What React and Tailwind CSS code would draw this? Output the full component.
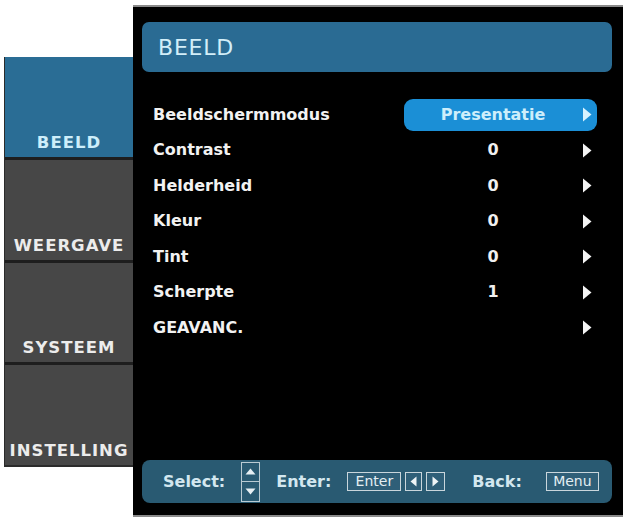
import React from "react";

const font = { fontFamily: '"DejaVu Sans", Verdana, sans-serif' };

function Arrow({ className = "fill-white" }) {
  return (
    <svg width="10" height="15" viewBox="0 0 10 15" className={className}>
      <path d="M1 0.5 L9.5 7.5 L1 14.5 Z" />
    </svg>
  );
}

function Row({ label, value, active }) {
  return (
    <div className="flex h-[35.5px] items-center">
      <div className="flex-1 pl-[11px] text-[16px] font-bold text-[#f2f2f2]">{label}</div>
      <div
        className={
          "mr-[15px] flex h-[32px] w-[193px] items-center rounded-[9px] " +
          (active ? "bg-[#1b8fd6]" : "")
        }
      >
        <span
          className={
            "w-[178px] text-center text-[16px] font-bold " +
            (active ? "text-[#cdeefb]" : "text-[#f0f0f0]")
          }
        >
          {value}
        </span>
        <Arrow className={active ? "fill-[#d8f3ff]" : "fill-[#f4f4f4]"} />
      </div>
    </div>
  );
}

function Tab({ label, active }) {
  return (
    <div
      className={
        "flex h-[100px] items-end justify-center pb-[6px] text-[16.5px] font-bold leading-[17px] tracking-[1px] " +
        (active ? "bg-[#2a6d95] text-[#cdeefa]" : "bg-[#474747] text-[#ececec]")
      }
    >
      {label}
    </div>
  );
}

function KeyBox({ children, className = "" }) {
  return (
    <div
      className={
        "flex h-[19px] items-center justify-center border border-[#c9d6dc] bg-[#2f5f78] text-[14px] text-[#e4eef2] " +
        className
      }
    >
      {children}
    </div>
  );
}

export default function App() {
  const rows = [
    ["Beeldschermmodus", "Presentatie", true],
    ["Contrast", "0"],
    ["Helderheid", "0"],
    ["Kleur", "0"],
    ["Tint", "0"],
    ["Scherpte", "1"],
    ["GEAVANC.", ""],
  ];

  return (
    <div className="flex h-[520px] w-[623px] overflow-hidden bg-white pl-[4px]" style={font}>
      {/* side menu */}
      <div className="mt-[57px] flex h-[410px] w-[129px] flex-col gap-[3px] border-b-2 border-l border-[#2b2b2b] bg-[#1e1e1e]">
        <Tab label="BEELD" active />
        <Tab label="WEERGAVE" />
        <Tab label="SYSTEEM" />
        <Tab label="INSTELLING" />
      </div>

      {/* main panel */}
      <div className="mt-[5px] flex h-[512px] flex-1 flex-col border-y-2 border-[#8a8a8a] bg-black pl-[9px] pr-[11px]">
        <div className="mt-[15px] flex h-[50px] items-center rounded-[7px] bg-[#2a6b93] pl-[16px] text-[22px] tracking-[0.8px] text-[#d2eef8]">
          BEELD
        </div>

        <div className="mt-[25px] flex flex-col">
          {rows.map(([l, v, a]) => (
            <Row key={l} label={l} value={v} active={a} />
          ))}
        </div>

        {/* key help bar */}
        <div className="mb-[12px] mt-auto flex h-[43px] items-center rounded-[8px] bg-[#295a72] pl-[21px] text-[16px] font-bold text-[#d3e7ef]">
          <span>Select:</span>
          <div className="ml-[16px] flex h-[40px] w-[19px] flex-col border border-[#b9cbd3]">
            <div className="flex flex-1 items-center justify-center border-b border-[#b9cbd3]">
              <svg width="11" height="7" viewBox="0 0 11 7" className="fill-[#e6eff3]">
                <path d="M0.5 6.5 L5.5 0.5 L10.5 6.5 Z" />
              </svg>
            </div>
            <div className="flex flex-1 items-center justify-center">
              <svg width="11" height="7" viewBox="0 0 11 7" className="fill-[#e6eff3]">
                <path d="M0.5 0.5 L5.5 6.5 L10.5 0.5 Z" />
              </svg>
            </div>
          </div>
          <span className="ml-[16px]">Enter:</span>
          <KeyBox className="ml-[16px] w-[54px] font-normal">Enter</KeyBox>
          <KeyBox className="ml-[4px] w-[17px]">
            <svg width="7" height="11" viewBox="0 0 7 11" className="fill-[#eef4f6]">
              <path d="M6.5 0.5 L0.5 5.5 L6.5 10.5 Z" />
            </svg>
          </KeyBox>
          <KeyBox className="ml-[4px] w-[19px]">
            <svg width="7" height="11" viewBox="0 0 7 11" className="fill-[#eef4f6]">
              <path d="M0.5 0.5 L6.5 5.5 L0.5 10.5 Z" />
            </svg>
          </KeyBox>
          <span className="ml-[27px]">Back:</span>
          <KeyBox className="ml-[24px] w-[53px] font-normal">Menu</KeyBox>
        </div>
      </div>
    </div>
  );
}
